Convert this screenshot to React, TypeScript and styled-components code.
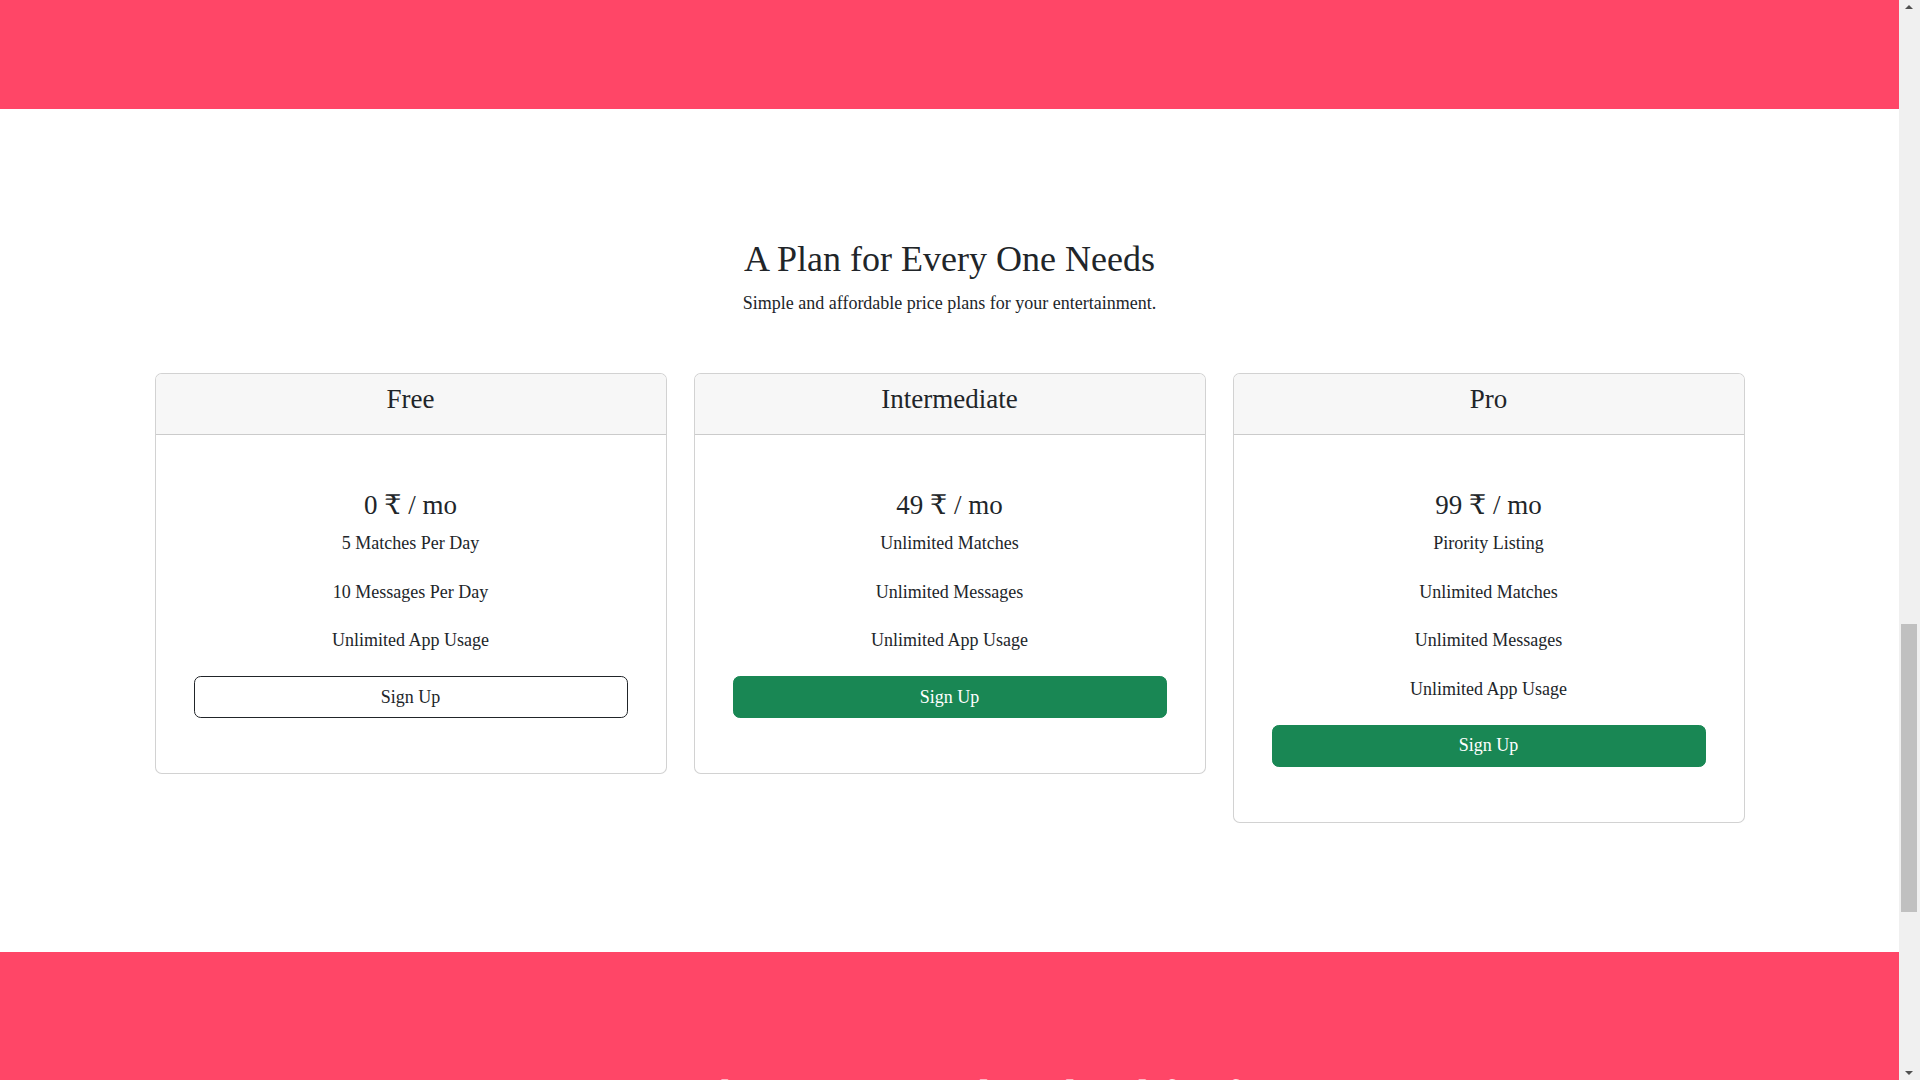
import React, { useLayoutEffect, useEffect } from "react";
import styled, { createGlobalStyle } from "styled-components";

const GlobalStyle = createGlobalStyle`
  html {
    scroll-behavior: auto;
  }
  body {
    margin: 0;
    font-family: "Liberation Serif", "Times New Roman", "DejaVu Serif", serif;
    font-size: 18px;
    line-height: 1.5;
    color: #212529;
    background: #ffffff;
  }
  *, *::before, *::after { box-sizing: border-box; }
`;

const PINK = "#ff4667";
const SCROLL_TOP = 2282;

const Page = styled.div`
  width: calc(100% - 21px);
`;

const Hero = styled.section`
  height: 2391px;
  background: ${PINK};
`;

const Pricing = styled.section`
  background: #ffffff;
  padding: 129px 0 128.5px;
  display: flex;
  flex-direction: column;
  align-items: center;
`;

const Title = styled.h2`
  margin: 0 0 9px;
  font-size: 36px;
  font-weight: 400;
  line-height: 1.2;
  text-align: center;
`;

const Subtitle = styled.p`
  margin: 0;
  font-size: 18px;
  line-height: 27px;
  text-align: center;
`;

const CardRow = styled.div`
  margin-top: 55.5px;
  display: flex;
  align-items: flex-start;
  justify-content: center;
  gap: 27px;
`;

const Card = styled.div`
  width: 512px;
  border: 1px solid rgba(0, 0, 0, 0.175);
  border-radius: 6.75px;
  background: #fff;
  text-align: center;
  overflow: hidden;
`;

const CardHeader = styled.div`
  padding: 9.5px 18px 9px;
  background: #f7f7f7;
  border-bottom: 1px solid rgba(0, 0, 0, 0.175);
`;

const PlanName = styled.h4`
  margin: 0 0 9.5px;
  font-size: 27px;
  font-weight: 400;
  line-height: 1.2;
`;

const CardBody = styled.div`
  padding: 53.5px 38px 55px;
`;

const Price = styled.h1`
  margin: 0 0 8.9px;
  font-size: 27px;
  font-weight: 400;
  line-height: 1.2;
`;

const Features = styled.ul`
  list-style: none;
  margin: 0;
  padding: 0;
`;

const Feature = styled.li`
  font-size: 18px;
  line-height: 27px;
  margin-bottom: 21.7px;
`;

const Button = styled.button<{ $variant: "outline" | "solid" }>`
  display: block;
  width: 100%;
  padding: 6.75px 13.5px;
  font-family: inherit;
  font-size: 18px;
  line-height: 27px;
  border-radius: 6.75px;
  cursor: pointer;
  border: 1px solid ${(p) => (p.$variant === "solid" ? "#198754" : "#212529")};
  background: ${(p) => (p.$variant === "solid" ? "#198754" : "transparent")};
  color: ${(p) => (p.$variant === "solid" ? "#ffffff" : "#212529")};
`;

const Download = styled.section`
  height: 695px;
  background: ${PINK};
  padding: 117px 0 0;
  text-align: center;
`;

const DownloadTitle = styled.h1`
  margin: 0;
  color: #ffffff;
  font-size: 45px;
  font-weight: 400;
  line-height: 1.2;
`;

/* decorative imitation of the browser's classic scrollbar seen in the reference */
const ScrollTrack = styled.div`
  position: fixed;
  top: 0;
  right: 0;
  width: 21px;
  height: 100vh;
  background: #f0f0f0;
  display: flex;
  flex-direction: column;
  align-items: center;
  justify-content: space-between;
  padding: 5px 0;
`;

const ScrollThumb = styled.div`
  position: absolute;
  left: 2px;
  right: 3px;
  top: 624px;
  height: 288px;
  background: #c0c0c0;
`;

const Arrow = styled.span<{ $down?: boolean }>`
  width: 0;
  height: 0;
  border-left: 4px solid transparent;
  border-right: 4px solid transparent;
  ${(p) =>
    p.$down
      ? "border-top: 4px solid #505050;"
      : "border-bottom: 4px solid #505050;"}
  margin-right: 1px;
`;

type Plan = {
  name: string;
  price: string;
  features: string[];
  variant: "outline" | "solid";
};

const plans: Plan[] = [
  {
    name: "Free",
    price: "0 ₹ / mo",
    features: ["5 Matches Per Day", "10 Messages Per Day", "Unlimited App Usage"],
    variant: "outline",
  },
  {
    name: "Intermediate",
    price: "49 ₹ / mo",
    features: ["Unlimited Matches", "Unlimited Messages", "Unlimited App Usage"],
    variant: "solid",
  },
  {
    name: "Pro",
    price: "99 ₹ / mo",
    features: [
      "Pirority Listing",
      "Unlimited Matches",
      "Unlimited Messages",
      "Unlimited App Usage",
    ],
    variant: "solid",
  },
];

export default function App() {
  useLayoutEffect(() => {
    window.scrollTo(0, SCROLL_TOP);
  }, []);
  useEffect(() => {
    window.scrollTo(0, SCROLL_TOP);
    const t = setTimeout(() => window.scrollTo(0, SCROLL_TOP), 50);
    return () => clearTimeout(t);
  }, []);

  return (
    <>
      <GlobalStyle />
      <Page>
        <Hero />
        <Pricing>
          <Title>A Plan for Every One Needs</Title>
          <Subtitle>Simple and affordable price plans for your entertainment.</Subtitle>
          <CardRow>
            {plans.map((plan) => (
              <Card key={plan.name}>
                <CardHeader>
                  <PlanName>{plan.name}</PlanName>
                </CardHeader>
                <CardBody>
                  <Price>{plan.price}</Price>
                  <Features>
                    {plan.features.map((f) => (
                      <Feature key={f}>{f}</Feature>
                    ))}
                  </Features>
                  <Button $variant={plan.variant}>Sign Up</Button>
                </CardBody>
              </Card>
            ))}
          </CardRow>
        </Pricing>
        <Download>
          <DownloadTitle>Available on iOS and Android for free</DownloadTitle>
        </Download>
      </Page>
      <ScrollTrack aria-hidden="true">
        <Arrow />
        <ScrollThumb />
        <Arrow $down />
      </ScrollTrack>
    </>
  );
}
